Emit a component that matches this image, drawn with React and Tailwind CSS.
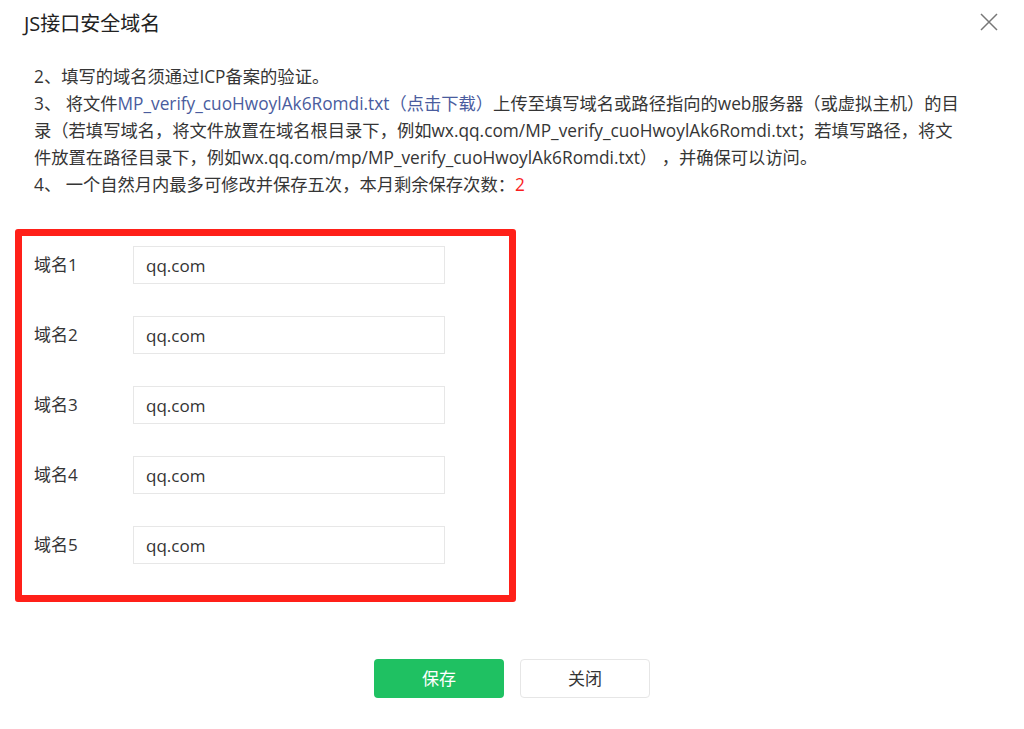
import React from "react";

const font = "font-['Open_Sans','Noto_Sans_CJK_SC',sans-serif]";

function Row({ label }) {
  return (
    <div className="flex items-center h-[38px]">
      <div className="w-[99px] text-[17px] text-[#353535]">{label}</div>
      <input
        readOnly
        defaultValue="qq.com"
        className={`w-[312px] h-[38px] border border-[#e7e7e7] bg-white pl-[12px] text-[17px] text-[#333] outline-none ${font}`}
      />
    </div>
  );
}

export default function App() {
  return (
    <div className={`w-[1024px] h-[729px] bg-white text-[#353535] ${font}`}>
      <div className="flex items-start justify-between pl-[24px] pr-[26px] pt-[10px]">
        <div className="text-[20px] leading-[28px] text-[#222]">JS接口安全域名</div>
        <svg width="18" height="18" viewBox="0 0 18 18" className="mt-[3px]">
          <path d="M1 1 L17 17 M17 1 L1 17" stroke="#777" strokeWidth="1.5" fill="none" />
        </svg>
      </div>

      <div className="mt-[25px] pl-[34px] text-[17.3px] leading-[27px] whitespace-nowrap">
        <div>2、填写的域名须通过ICP备案的验证。</div>
        <div>
          3、 将文件<span className="text-[#4a5c9e]">MP_verify_cuoHwoylAk6Romdi.txt（点击下载）</span>上传至填写域名或路径指向的web服务器（或虚拟主机）的目
        </div>
        <div>录（若填写域名，将文件放置在域名根目录下，例如wx.qq.com/MP_verify_cuoHwoylAk6Romdi.txt；若填写路径，将文</div>
        <div>件放置在路径目录下，例如wx.qq.com/mp/MP_verify_cuoHwoylAk6Romdi.txt） ，并确保可以访问。</div>
        <div>
          4、 一个自然月内最多可修改并保存五次，本月剩余保存次数：<span className="text-[#fa1e1e]">2</span>
        </div>
      </div>

      <div className="ml-[15px] mt-[31px] w-[501px] h-[373px] border-[7px] border-[#ff2019] rounded-[3px] pt-[10px] pl-[12px] flex flex-col gap-[32px]">
        <Row label="域名1" />
        <Row label="域名2" />
        <Row label="域名3" />
        <Row label="域名4" />
        <Row label="域名5" />
      </div>

      <div className="mt-[57px] flex justify-center gap-[16px]">
        <button className={`w-[130px] h-[39px] rounded-[4px] bg-[#1fc162] text-white text-[17px] ${font}`}>保存</button>
        <button className={`w-[130px] h-[39px] rounded-[4px] bg-white border border-[#e6e6e6] text-[#353535] text-[17px] ${font}`}>关闭</button>
      </div>
    </div>
  );
}
